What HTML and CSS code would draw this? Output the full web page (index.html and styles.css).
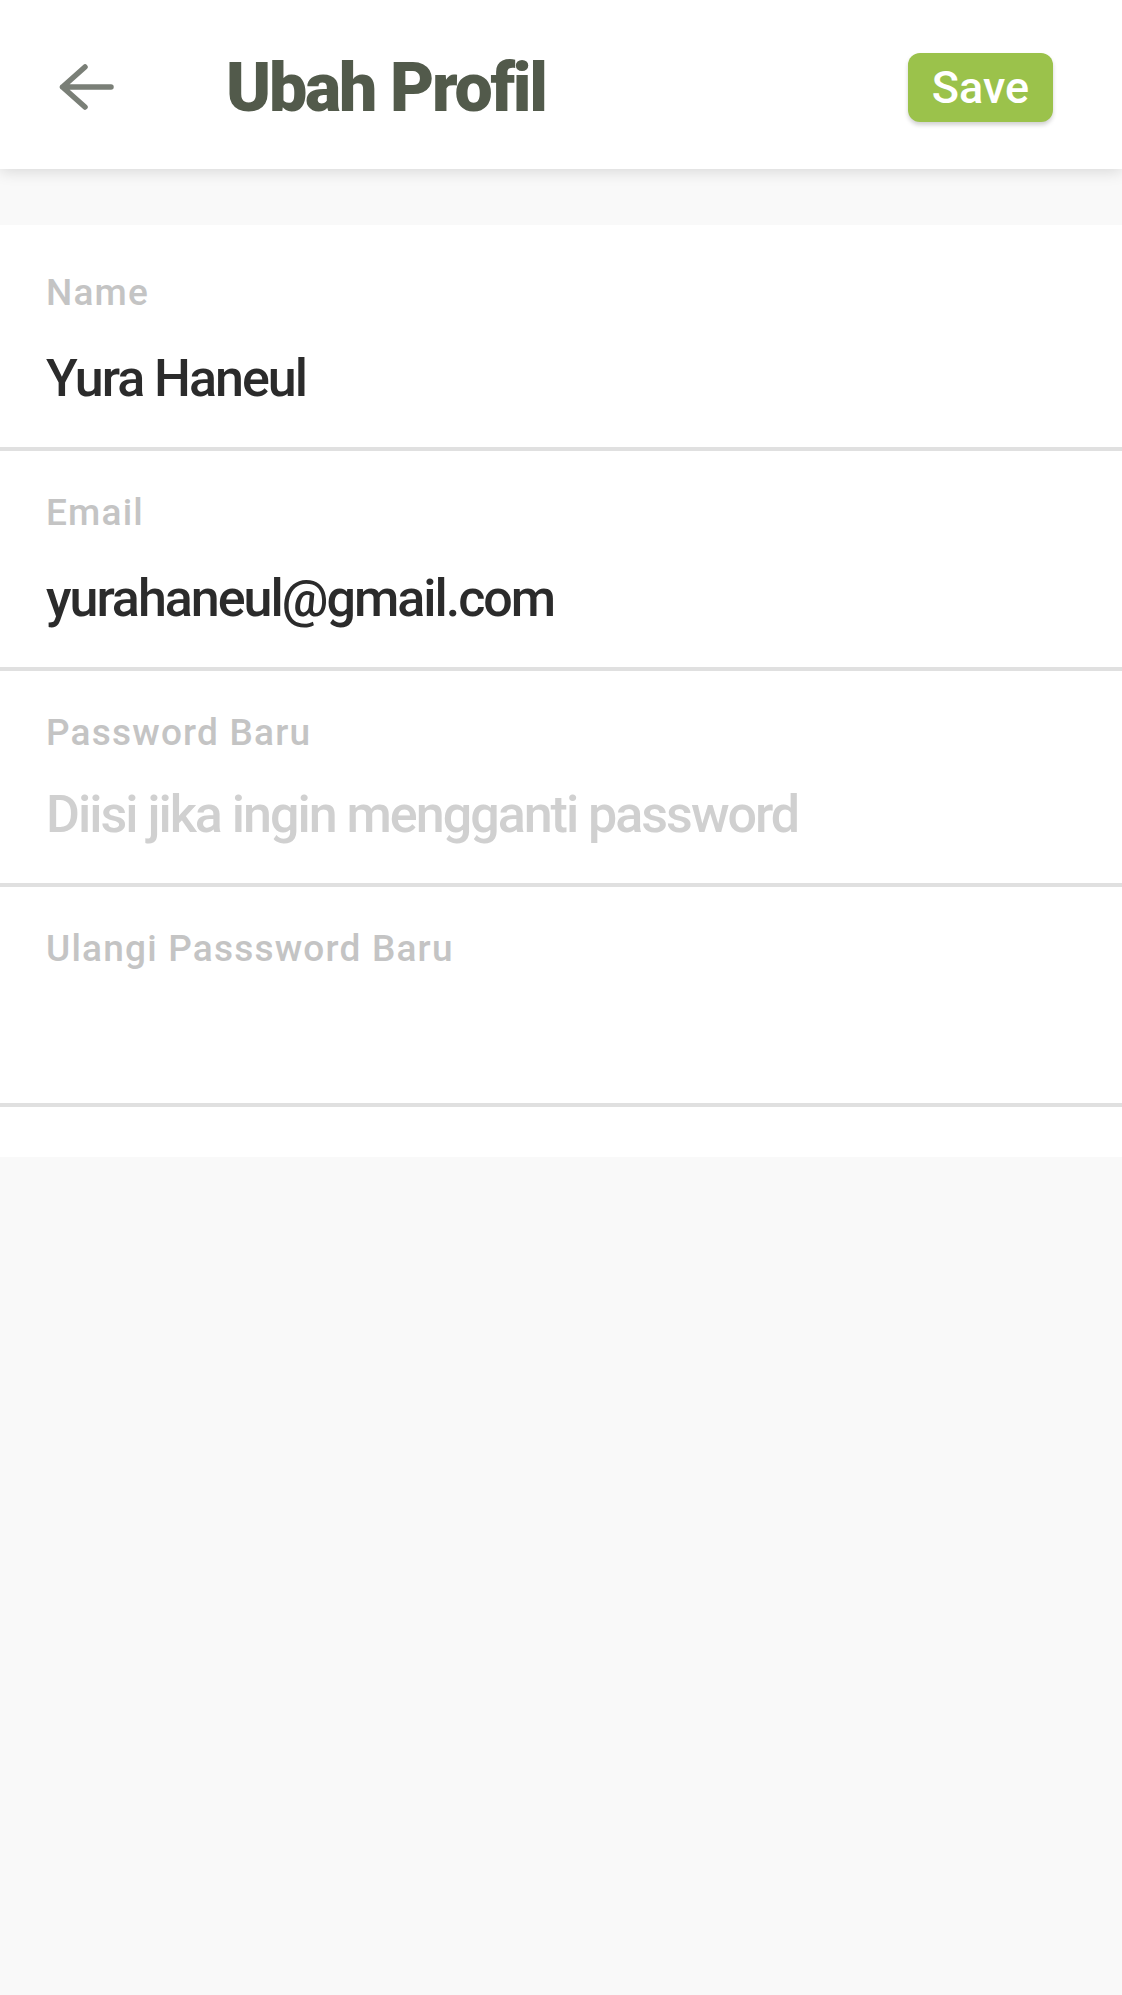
FILE: index.html
```html
<!DOCTYPE html>
<html lang="id">
<head>
<meta charset="utf-8">
<title>Ubah Profil</title>
<link rel="stylesheet" href="styles.css">
</head>
<body>
<header class="appbar">
  <svg class="back" width="56" height="48" viewBox="0 0 56 48" aria-label="Kembali">
    <path d="M26 4 L3.5 24 L26 44 M3.5 24 H52" fill="none" stroke="#7a7f77" stroke-width="5.5" stroke-linecap="round" stroke-linejoin="round"/>
  </svg>
  <h1 class="title">Ubah Profil</h1>
  <button class="save">Save</button>
</header>
<div class="band"></div>
<main class="form">
  <div class="field">
    <div class="label">Name</div>
    <div class="value">Yura Haneul</div>
  </div>
  <div class="field">
    <div class="label">Email</div>
    <div class="value">yurahaneul@gmail.com</div>
  </div>
  <div class="field field-short">
    <div class="label">Password Baru</div>
    <div class="value placeholder">Diisi jika ingin mengganti password</div>
  </div>
  <div class="field">
    <div class="label">Ulangi Passsword Baru</div>
    <div class="value"></div>
  </div>
</main>
</body>
</html>
```
FILE: styles.css
```css
html, body {
  margin: 0;
  padding: 0;
}
body {
  background: #f9f9f9;
  font-family: Roboto, "Noto Sans", "Liberation Sans", sans-serif;
  min-height: 1995px;
}
.appbar {
  position: relative;
  z-index: 1;
  height: 169px;
  box-sizing: border-box;
  padding: 4px 69px 0 59px;
  background: #ffffff;
  display: flex;
  align-items: center;
  box-shadow: 0 3px 14px rgba(0, 0, 0, 0.13);
}
.back {
  flex: none;
  display: block;
}
.title {
  margin: 2px 0 0 111px;
  flex: 1;
  font-size: 68px;
  line-height: 80px;
  font-weight: 900;
  color: #525a4b;
  letter-spacing: -2.2px;
}
.save {
  flex: none;
  margin-top: 2px;
  width: 145px;
  height: 69px;
  border: none;
  border-radius: 12px;
  background: #9bc24b;
  color: #ffffff;
  font-family: Roboto, "Noto Sans", sans-serif;
  font-size: 45px;
  font-weight: 500;
  line-height: 69px;
  padding: 0;
  box-shadow: 0 3px 4px rgba(0, 0, 0, 0.18);
}
.band {
  height: 56px;
}
.form {
  background: #ffffff;
  padding: 6px 0 50px;
}
.field {
  padding: 40px 46px 36px;
  border-bottom: 4px solid #e0e0e0;
}
.label {
  font-size: 37px;
  line-height: 44px;
  height: 44px;
  font-weight: 500;
  color: #c4c4c4;
  letter-spacing: 1.2px;
}
.value {
  margin-top: 32px;
  font-size: 52px;
  line-height: 64px;
  height: 64px;
  font-weight: 500;
  color: #2b2b2b;
  letter-spacing: -2px;
  white-space: nowrap;
}
.field-short {
  padding-bottom: 33px;
}
.placeholder {
  margin-top: 28px;
  margin-bottom: 3px;
  color: #d0d0d0;
}
```
